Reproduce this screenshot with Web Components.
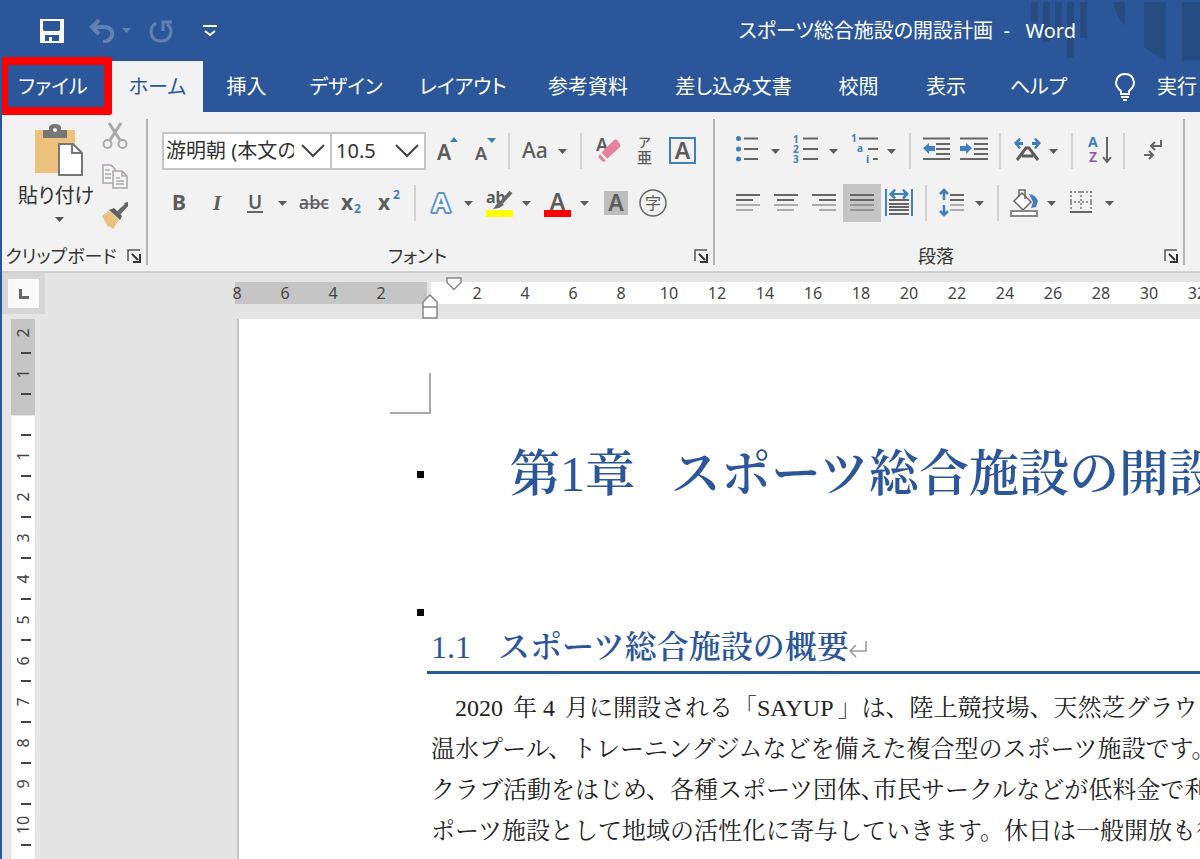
<!DOCTYPE html>
<html lang="ja">
<head>
<meta charset="utf-8">
<title>スポーツ総合施設の開設計画 - Word</title>
<style>
  html, body { margin: 0; height: 100%; }
  body {
    overflow: hidden;
    font-family: "Noto Sans", "Noto Sans CJK JP", sans-serif;
    --blue: #2b579a;
    --chrome: #f2f2f2;
    --desk: #e5e5e5;
    --ink: #5c5c5c;
    --accent: #3f7fbd;
  }
</style>
</head>
<body>
<word-window></word-window>

<script>
const line = (x1, y, x2, w = 2) => `<path d="M${x1} ${y}H${x2}" stroke="#666" stroke-width="${w}"/>`;
const txt = (x, y, size, s, extra = '') =>
  `<text x="${x}" y="${y}" font-size="${size}" ${extra}>${s}</text>`;
const B = 'font-weight="700"';
const BLUE = 'fill="#3f7fbd"';

/* Every icon is drawn on a 38 x 38 grid, the size of a ribbon button. */
const ICONS = {
  grow: txt(11, 28, 21, 'A', 'font-weight="600"') + `<path d="M24 10h8l-4-5z" ${BLUE}/>`,
  shrink: txt(11, 28, 18, 'A', 'font-weight="600"') + `<path d="M23 6h9l-4 5z" ${BLUE}/>`,
  case: txt(6, 26, 21, 'Aa', 'font-weight="500"'),
  clear: txt(8, 19, 18, 'A', 'font-weight="600"') +
    `<path d="M13 21l13-13q2-1 3 0l3 4q1 2 0 3L19 27z" fill="#e8819b"/><path d="M12 22l6 7-3 1-5-5z" fill="#e8819b"/><path d="M12.500 20.500l7 7.500" stroke="#f2f2f2" stroke-width="1.500"/>`,
  ruby: txt(12, 15, 13, 'ア', 'font-weight="500"') + txt(11, 31, 15, '亜', 'font-weight="500"'),
  boxed: `<rect x="6" y="6" width="25" height="25" fill="none" stroke="#3f7fbd" stroke-width="2"/>` + txt(18.500, 27, 23, 'A', 'font-weight="600" text-anchor="middle"'),
  bold: txt(19, 26, 21, 'B', B + ' text-anchor="middle"'),
  italic: txt(19, 26, 21, 'I', 'font-weight="700" font-style="italic" font-family="Liberation Serif, serif" text-anchor="middle"'),
  underline: txt(19, 25, 19, 'U', 'font-weight="600" text-anchor="middle"') + line(11, 28, 27, 2),
  strike: txt(20, 25, 18, 'abc', 'text-anchor="middle" font-weight="500"') + line(6, 20, 34, 1.500),
  sub: txt(9, 26, 21, 'x', B) + txt(22, 29, 12, '2', BLUE + ' ' + B),
  sup: txt(8, 26, 21, 'x', B) + txt(23, 15, 12, '2', BLUE + ' ' + B),
  effect: `<g font-size="26" text-anchor="middle"><text x="19" y="28" font-weight="600" paint-order="stroke" style="fill:#fff;stroke:#5b94cc;stroke-width:4;stroke-linejoin:round">A</text></g>`,
  marker: txt(6, 19, 16, 'ab', B) + `<path d="M31 8L20 20" stroke="#686868" stroke-width="4"/><path d="M19 17l5 4-5 3-6 1z" fill="#686868"/><path d="M6 26h27v7H6z" fill="#ff0"/>`,
  color: txt(19.500, 26, 23, 'A', 'font-weight="600" text-anchor="middle"') + `<path d="M6 26h27v7H6z" fill="#f00"/>`,
  shade: `<path d="M8 7h24v24H8z" fill="#bdbdbd"/>` + txt(20, 27, 23, 'A', 'font-weight="600" text-anchor="middle"'),
  enclose: `<circle cx="19" cy="19" r="13" fill="none" stroke="#666" stroke-width="1.500"/>` + txt(19, 25, 16, '字', 'text-anchor="middle"'),
  bullets: [6.5, 17, 27].map(y => `<circle cx="9.500" cy="${y}" r="2.500" ${BLUE}/>` + line(15, y, 29)).join(''),
  numbers: [6.5, 17, 27].map((y, i) => txt(6, y + 4, 10, i + 1, BLUE + ' ' + B) + line(16, y, 31)).join(''),
  levels: txt(6, 10, 10, '1', BLUE + ' ' + B) + line(14, 6.5, 33) + txt(12, 20, 10, 'a', BLUE + ' ' + B) + line(23, 17, 33) + txt(21, 31, 11, 'i', BLUE + ' ' + B) + line(28, 27, 33),
  outdent: line(6, 6.5, 33) + line(19, 12, 33) + line(19, 17, 33) + line(19, 22, 33) + line(6, 27, 33) + `<path d="M6 16l6-5v3h6v5h-6v3z" ${BLUE}/>`,
  indent: line(5, 6.5, 33) + line(19, 12, 33) + line(19, 17, 33) + line(19, 22, 33) + line(5, 27, 33) + `<path d="M17 16l-6-5v3H5v5h6v3z" ${BLUE}/>`,
  asian: `<path d="M10 28l9-12h3l9 12M15 24h11" fill="none" stroke="#5c5c5c" stroke-width="3"/><path d="M7 11l5-5 2 1-2 3h4v3h-4l2 3-2 1zM34 11l-5-5-2 1 2 3h-4v3h4l-2 3 2 1z" ${BLUE}/>`,
  sort: txt(9, 15, 14, 'A', BLUE + ' ' + B) + txt(10, 30, 14, 'Z', 'fill="#8f4fb0" font-weight="600"') + `<path d="M28 5v24M24 25l4 5 4-5" fill="none" stroke="#666" stroke-width="2"/>`,
  marks: `<path d="M30 8v6h-9M24 10l-4 4 4 4M13 23h8M18 19l4 4-4 4" fill="none" stroke="#666" stroke-width="2"/>`,
  left: line(7, 11, 31) + line(7, 16, 24) + line(7, 21, 31, 1) + line(7, 26, 24, 1),
  center: line(7, 11, 31) + line(10, 16, 27) + line(7, 21, 31, 1) + line(10, 26, 27, 1),
  right: line(7, 11, 31) + line(14, 16, 31) + line(7, 21, 31, 1) + line(14, 26, 31, 1),
  justify: line(7, 11, 31) + line(7, 16, 31) + line(7, 21, 31, 1) + line(7, 26, 31, 1),
  distribute: `<path d="M5 5v27M31 5v27" stroke="#3f7fbd" stroke-width="2"/><path d="M8 10l5-5 2 1-2 3h10l-2-3 2-1 5 5-5 5-2-1 2-3H13l2 3-2 1z" ${BLUE}/>` + [16, 20, 23, 26, 30].map(y => line(8, y, 28)).join(''),
  spacing: `<path d="M11 6v10M7 10l4-4 4 4M11 21v10M7 27l4 4 4-4" fill="none" stroke="#3f7fbd" stroke-width="2.500"/>` + line(17, 11, 31) + line(17, 16, 31) + line(17, 21, 31, 1) + line(17, 26, 31, 1),
  fill: `<path d="M9 17l8-8 9 9-8 8z" fill="#fff" stroke="#666" stroke-width="1.500"/><path d="M14 12V6h6v9" fill="none" stroke="#666" stroke-width="1.500"/><path d="M24 10q7 1 9 7l-2 6-5 1 2-6z" ${BLUE}/><rect x="6" y="27" width="26" height="5" fill="#fff" stroke="#888" stroke-width="2"/>`,
  borders: `<path d="M7 8h22M7 18h22M8 7v20M18 7v20M28 7v20" stroke="#777" stroke-width="1.500" stroke-dasharray="2 2" fill="none"/>` + line(7, 28, 29),
  cut: `<path d="M13 5l11 17M25 5L14 22" stroke="#a9a9a9" stroke-width="3"/><circle cx="11.500" cy="26" r="4" fill="none" stroke="#a9a9a9" stroke-width="2"/><circle cx="26.500" cy="26" r="4" fill="none" stroke="#a9a9a9" stroke-width="2"/>`,
  copy: `<g fill="#f7f5f7" stroke="#aaa5aa" stroke-width="1.500"><path d="M7 7h8l4 4v14H7z"/><path d="M17 13h9l5 5v12H17z"/><path d="M26 13v5h5M9 12h5M9 16h6M9 20h6M20 20h4M20 23h8M20 26h8" fill="none"/></g>`,
  brush: `<path d="M6 18l7-5 10 9-6 9-4-3-1 1z" fill="#edc27c"/><path d="M13 12l5-2 8 8-2 4z" fill="#5f5f5f"/><path d="M20 14l9-8 3 2-8 9z" fill="#6a6a6a"/><path d="M28 5l4-1v5z" fill="#5f5f5f"/>`
};

const CARET = `<svg width="9" height="5" viewBox="0 0 9 5" aria-hidden="true"><path d="M0 0h9L4.500 5z" fill="currentColor"/></svg>`;

function define(name, template) {
  customElements.define(name, class extends HTMLElement {
    constructor() {
      super();
      this.attachShadow({ mode: 'open' });
    }
    connectedCallback() {
      if (this.shadowRoot.childNodes.length) return;
      this.shadowRoot.innerHTML = typeof template === 'function' ? template(this) : template;
    }
  });
}

define('tool-button', el => `
  <style>
    :host { display: flex; flex: none; height: 38px; }
    button { width: 38px; height: 38px; padding: 0; border: 0; background: none; color: var(--ink); font: inherit; }
    button.on { background: #c5c5c5; }
    button.more { width: 16px; margin-right: 4px; display: grid; place-items: center; }
    svg { display: block; }
    text { fill: var(--ink); }
    text[fill="#3f7fbd"] { fill: #3f7fbd; }
    text[fill="#8f4fb0"] { fill: #8f4fb0; }
  </style>
  <button class="${el.hasAttribute('pressed') ? 'on' : ''}" aria-label="${el.getAttribute('label')}">
    <svg width="38" height="38" viewBox="0 0 38 38" aria-hidden="true">${ICONS[el.getAttribute('icon')]}</svg>
  </button>
  ${el.hasAttribute('split') ? `<button class="more" aria-label="${el.getAttribute('label')}のオプション">${CARET}</button>` : ''}`);

define('tool-divider', `
  <style>:host { display: block; flex: none; width: 2px; height: 36px; margin: 0 6px; background: #d2d2d2; }</style>`);

define('combo-box', el => `
  <style>
    :host { display: grid; flex: none; height: 38px; box-sizing: border-box; background: #fff; border: 2px solid #c6c6c6; }
    select, svg { grid-area: 1 / 1; }
    select { appearance: none; width: 100%; min-width: 0; height: 34px; border: 0; margin: 0; background: none; color: #333;
      padding: 0 36px 0 var(--combo-inset, 2px); font: 20px/34px "Noto Sans", "Noto Sans CJK JP", sans-serif; }
    svg { justify-self: end; align-self: center; margin-right: 5px; pointer-events: none; }
  </style>
  <select aria-label="${el.getAttribute('label')}"><option>${el.getAttribute('value')}</option></select>
  <svg width="24" height="14" viewBox="0 0 24 14" aria-hidden="true"><path d="M1 1l11 11L23 1" fill="none" stroke="#444" stroke-width="2"/></svg>`);

define('ribbon-group', el => `
  <style>
    :host { display: flex; flex: none; flex-direction: column; box-sizing: border-box; height: 159px; position: relative; }
    .body { flex: 1; padding: 20px 12px 0; }
    :host([wide-start]) .body { padding-left: 14px; }
    footer { display: flex; align-items: center; height: 30px; }
    h2 { flex: 1; margin: 0; text-align: center; font-weight: 400; font-size: 18px; line-height: 24px; color: #333; white-space: nowrap; font-feature-settings: "palt"; }
    button { width: 28px; height: 24px; padding: 0; border: 0; background: none; display: grid; place-items: center; }
    i { position: absolute; right: 0; top: 7px; bottom: 6px; width: 2px; background: #b4b4b4; }
  </style>
  <div class="body"><slot></slot></div>
  <footer>
    <h2>${el.getAttribute('name')}</h2>
    <button aria-label="${el.getAttribute('name')}の設定"><svg width="14" height="14" viewBox="0 0 14 14" aria-hidden="true"><path d="M1 12V1h12" fill="none" stroke="#555" stroke-width="1.500"/><path d="M5 5l6 6M13 5v8H6" fill="none" stroke="#333" stroke-width="2"/></svg></button>
  </footer>
  <i></i>`);

define('paste-button', `
  <style>
    :host { display: block; }
    button { display: flex; flex-direction: column; align-items: center; padding: 0; border: 0; background: none; font: inherit; color: #333; }
    .art { margin-left: 6px; }
    span { font-size: 20px; line-height: 30px; margin-top: 5px; white-space: nowrap; font-feature-settings: "palt"; }
    .c { display: block; height: 5px; margin-top: 5px; margin-left: 6px; line-height: 0; color: #555; }
  </style>
  <button>
    <svg class="art" width="50" height="52" viewBox="0 0 50 52" aria-hidden="true">
      <path d="M1 6h40v43H1z" fill="#edc27c"/>
      <path d="M9 6h6V3q1-3 6-3t6 3v3h6v8H9z" fill="#777"/><circle cx="21" cy="6" r="2" fill="#f2f2f2"/>
      <path d="M25 20h14l9 9v22H25z" fill="#fff" stroke="#777" stroke-width="2"/><path d="M38 20v9h10" fill="none" stroke="#777" stroke-width="2"/>
    </svg>
    <span>貼り付け</span>
    <i class="c">${CARET}</i>
  </button>`);

define('title-bar', `
  <style>
    :host { display: flex; align-items: center; height: 61px; position: relative; color: #fff; background: var(--blue); }
    .deco { position: absolute; right: 0; top: 0; }
    nav { display: flex; align-items: center; padding-left: 36px; }
    button { padding: 0; border: 0; background: none; color: #5f81b4; height: 32px; display: grid; place-items: center; }
    .save { width: 28px; margin-right: 20px; }
    .undo { width: 32px; } .drop { width: 16px; margin-right: 11px; } .redo { width: 32px; margin-right: 17px; } .custom { width: 32px; }
    h1 { position: relative; margin: 0 124px 0 auto; font-size: 20px; line-height: 30px; font-weight: 400; white-space: pre; font-feature-settings: "palt"; }
  </style>
  <svg class="deco" width="170" height="61" viewBox="0 0 170 61" aria-hidden="true"><path fill="#274c82" d="M1 2h7v20H1zM13 2h7v40h-7zM25 2h7v31h-7zM37 2h7v56h-7zM50 2h7v36h-7zM83 2h12v24q-9-10-12-24zM114 2h22v58q-12-5-22-13zM152 2h18v63h-14l-4-2z"/></svg>
  <nav aria-label="クイック アクセス">
    <button class="save" aria-label="上書き保存"><svg width="24" height="24" viewBox="0 0 24 24"><path fill="#fff" fill-rule="evenodd" d="M0 0h24v24H0zM3 2v9l1 1h15l1-1V2zM5 16v6h4v-4h3v4h7v-6z"/></svg></button>
    <button class="undo" aria-label="元に戻す"><svg width="26" height="24" viewBox="0 0 26 24"><path d="M10 1L3 8l7 7M3 8h13q8 1 7 8-1 6-9 7" fill="none" stroke="currentColor" stroke-width="4"/></svg></button>
    <button class="drop" aria-label="元に戻す履歴">${CARET}</button>
    <button class="redo" aria-label="やり直し"><svg width="24" height="24" viewBox="0 0 24 24"><path d="M7 4q-5 3-5 9 1 9 10 9t10-9q0-5-4-8M14 12V3h9" fill="none" stroke="currentColor" stroke-width="3"/></svg></button>
    <button class="custom" aria-label="カスタマイズ"><svg width="14" height="12" viewBox="0 0 14 12"><path d="M0 1h14M2 6l5 4 5-4" fill="none" stroke="#fff" stroke-width="2"/></svg></button>
  </nav>
  <h1>スポーツ総合施設の開設計画  -   Word</h1>`);

define('ribbon-tabs', `
  <style>
    :host { display: block; position: relative; background: var(--blue); color: #fff; }
    nav { display: grid; grid-template-columns: 102px 99px 87px 112px 122px 128px 163px 87px 88px 97px 1fr; height: 51px; overflow: hidden; }
    a { display: flex; align-items: center; justify-content: center; font-size: 20px; line-height: 30px; color: inherit; text-decoration: none; white-space: nowrap; font-feature-settings: "palt"; }
    a.active { background: var(--chrome); color: var(--blue); margin-left: 8px; }
    a.tell { justify-content: flex-start; gap: 22px; padding-left: 28px; }
    a.tell svg { flex: none; }
    .ring { position: absolute; left: -2px; top: -4px; width: 96px; height: 42px; border: 8px solid #f00; border-radius: 2px; z-index: 1; pointer-events: none; }
  </style>
  <nav aria-label="リボン">
    <a href="#file">ファイル</a><a href="#home" class="active" aria-current="page">ホーム</a><a href="#insert">挿入</a><a href="#design">デザイン</a><a href="#layout">レイアウト</a><a href="#references">参考資料</a><a href="#mailings">差し込み文書</a><a href="#review">校閲</a><a href="#view">表示</a><a href="#help">ヘルプ</a>
    <a href="#tell" class="tell"><svg width="20" height="28" viewBox="0 0 20 28" aria-hidden="true"><path d="M6 21v-3Q1 14 1 9.500 2 1 10 1t9 8.500Q19 14 14 18v3zM6 24h8M8 27h4" fill="none" stroke="#fff" stroke-width="2"/></svg>実行</a>
  </nav>
  <div class="ring"></div>`);

define('ribbon-panel', `
  <style>
    :host { display: flex; overflow: hidden; background: var(--chrome); border-bottom: 2px solid #d0d0d0; }
    .row { display: flex; align-items: center; height: 38px; }
    .row + .row { margin-top: 14px; }
    .clip { flex-basis: 146px; }
    .paste { display: flex; margin: -8px -12px 0 4px; }
    .stack { display: flex; flex-direction: column; height: 120px; justify-content: space-between; margin: -6px 0 0 2px; }
    .stack tool-button { height: 40px; }
    .font { flex-basis: 567px; }
    .para { flex-basis: 470px; }
    .name { width: 170px; margin-left: 2px; }
    .size { width: 96px; margin-left: -2px; --combo-inset: 4px; }
  </style>
  <ribbon-group class="clip" name="クリップボード">
    <div class="paste">
      <paste-button></paste-button>
      <div class="stack">
        <tool-button icon="cut" label="切り取り"></tool-button>
        <tool-button icon="copy" label="コピー"></tool-button>
        <tool-button icon="brush" label="書式のコピー"></tool-button>
      </div>
    </div>
  </ribbon-group>
  <ribbon-group class="font" name="フォント">
    <div class="row">
      <combo-box class="name" label="フォント" value="游明朝 (本文のフォント)"></combo-box>
      <combo-box class="size" label="フォント サイズ" value="10.5"></combo-box>
      <tool-button icon="grow" label="フォント サイズの拡大"></tool-button>
      <tool-button icon="shrink" label="フォント サイズの縮小"></tool-button>
      <tool-divider></tool-divider>
      <tool-button icon="case" label="文字種の変換" split></tool-button>
      <tool-divider></tool-divider>
      <tool-button icon="clear" label="書式のクリア"></tool-button>
      <tool-button icon="ruby" label="ルビ"></tool-button>
      <tool-button icon="boxed" label="囲み線"></tool-button>
    </div>
    <div class="row">
      <tool-button icon="bold" label="太字"></tool-button>
      <tool-button icon="italic" label="斜体"></tool-button>
      <tool-button icon="underline" label="下線" split></tool-button>
      <tool-button icon="strike" label="取り消し線"></tool-button>
      <tool-button icon="sub" label="下付き"></tool-button>
      <tool-button icon="sup" label="上付き"></tool-button>
      <tool-divider></tool-divider>
      <tool-button icon="effect" label="文字の効果" split></tool-button>
      <tool-button icon="marker" label="蛍光ペン" split></tool-button>
      <tool-button icon="color" label="フォントの色" split></tool-button>
      <tool-button icon="shade" label="文字の網かけ"></tool-button>
      <tool-button icon="enclose" label="囲い文字"></tool-button>
    </div>
  </ribbon-group>
  <ribbon-group class="para" name="段落" wide-start>
    <div class="row">
      <tool-button icon="bullets" label="箇条書き" split></tool-button>
      <tool-button icon="numbers" label="段落番号" split></tool-button>
      <tool-button icon="levels" label="アウトライン" split></tool-button>
      <tool-divider></tool-divider>
      <tool-button icon="outdent" label="インデントを減らす"></tool-button>
      <tool-button icon="indent" label="インデントを増やす"></tool-button>
      <tool-divider></tool-divider>
      <tool-button icon="asian" label="拡張書式" split></tool-button>
      <tool-divider></tool-divider>
      <tool-button icon="sort" label="並べ替え"></tool-button>
      <tool-divider></tool-divider>
      <tool-button icon="marks" label="編集記号の表示"></tool-button>
    </div>
    <div class="row">
      <tool-button icon="left" label="左揃え"></tool-button>
      <tool-button icon="center" label="中央揃え"></tool-button>
      <tool-button icon="right" label="右揃え"></tool-button>
      <tool-button icon="justify" label="両端揃え" pressed></tool-button>
      <tool-button icon="distribute" label="均等割り付け"></tool-button>
      <tool-divider></tool-divider>
      <tool-button icon="spacing" label="行間" split></tool-button>
      <tool-divider></tool-divider>
      <tool-button icon="fill" label="塗りつぶし" split></tool-button>
      <tool-button icon="borders" label="罫線" split></tool-button>
    </div>
  </ribbon-group>`);

define('page-ruler', () => {
  /* Two characters per 48px step, as many as the window shows. */
  const marks = [8, 6, 4, 2, ''];
  for (let n = 2; n <= (innerWidth - 430) / 24; n += 2) marks.push(n);
  return `
  <style>
    :host { display: flex; height: 46px; overflow: hidden; background: var(--desk); }
    button { flex: none; width: 43px; height: 41px; padding: 0; border: 6px solid #d6d6d6; background: #fbfbfb; display: grid; place-items: center; }
    .scale { flex: 1; min-width: 0; display: flex; position: relative; height: 22px; margin: 9px 0 0 168px;
      background: linear-gradient(90deg, transparent 22px, #c5c5c5 22px, #c5c5c5 214px, transparent 214px, transparent 218px, #fff 218px); }
    span { flex: none; width: 48px; text-align: center; font-size: 16px; line-height: 22px; color: #444; }
    .first { position: absolute; left: 233px; top: -5px; }
    .hang { position: absolute; left: 209px; top: 12px; }
  </style>
  <button aria-label="左揃えタブ"><svg width="10" height="10" viewBox="0 0 10 10" aria-hidden="true"><path d="M1.500 0v8.500H10" fill="none" stroke="#666" stroke-width="3"/></svg></button>
  <div class="scale">${marks.map(n => `<span>${n}</span>`).join('')}
    <svg class="first" width="16" height="14" viewBox="0 0 16 14"><path d="M1 1h14v4.500L8 12.500 1 5.500z" fill="#fff" stroke="#888" stroke-width="1.500"/></svg>
    <svg class="hang" width="16" height="25" viewBox="0 0 16 25"><path d="M1 24V8l7-7 7 7v16zM1 13h14" fill="#fff" stroke="#888" stroke-width="1.500"/></svg>
  </div>`;
});

define('side-ruler', () => {
  const marks = ['2', '1', ''];
  for (let n = 1; n <= (innerHeight - 415) / 41; n++) marks.push(n);
  return `
  <style>
    :host { display: block; flex: none; width: 24px; margin-left: 9px; overflow: hidden;
      background: linear-gradient(#c5c5c5 96px, var(--desk) 96px, var(--desk) 97px, #fff 97px); }
    div { margin-top: -7px; }
    p { display: grid; place-items: center; box-sizing: border-box; height: 41px; margin: 0; position: relative; }
    p::after { content: ""; position: absolute; left: 10px; bottom: -1px; width: 10px; height: 2px; background: #444; }
    span { font-size: 16px; line-height: 24px; color: #444; transform: rotate(-90deg); }
  </style>
  <div>${marks.map(n => `<p><span>${n}</span></p>`).join('')}</div>`;
});

define('document-page', `
  <style>
    :host { display: block; flex: 1; min-width: 0; margin-left: 202px; overflow: hidden; background: #fff; border-left: 2px solid #c6c6c6; white-space: nowrap;
      font-family: "Liberation Serif", "Noto Serif CJK JP", "Noto Sans CJK JP", serif; }
    .corner { width: 39px; height: 39px; margin: 54px 0 0 151px; border: solid #aaa; border-width: 0 2px 2px 0; }
    h1, h2 { margin: 0; font-weight: 600; color: var(--blue); }
    h1 { display: flex; align-items: center; margin-top: 30px; padding-left: 178px; font-size: 50px; line-height: 60px; }
    .dot { flex: none; width: 7px; height: 7px; background: #000; }
    h1 .dot { margin-right: 86px; }
    h1 b { font-weight: inherit; margin-right: 36px; }
    .num { font-weight: 500; }
    .solo { margin: 105px 0 0 178px; }
    h2 { margin: 11px 0 0 188px; padding: 0 0 4px 4px; border-bottom: 3px solid var(--blue); font-size: 32px; line-height: 40px; }
    h2 .num { margin-right: 27px; }
    p { margin: 14px 0 0 192px; font-size: 24px; line-height: 41px; color: #222; font-weight: 400; }
    .latin { margin-right: 4px; }
    .tight { font-feature-settings: "palt"; }
  </style>
  <div class="corner"></div>
  <h1><i class="dot"></i><b>第<span class="num">1</span>章</b><span>スポーツ総合施設の開設計画</span></h1>
  <div class="dot solo"></div>
  <h2><span class="num">1.1</span>スポーツ総合施設の概要<svg width="18" height="18" viewBox="0 0 18 18" aria-hidden="true"><path d="M17 1v10H2M7 5l-6 6 6 6" fill="none" stroke="#999" stroke-width="1.500"/></svg></h2>
  <p>　<span class="latin">2020</span> 年 <span class="latin">4</span> 月に開設される「<span class="latin">SAYUP</span>」は、陸上競技場、天然芝グラウ<br>温水プール、トレーニングジムなどを備えた複合型のスポーツ施設です。<br>クラブ活動をはじめ、各種スポーツ団体<span class="tight">、</span>市民サークルなどが低料金で利<br>ポーツ施設として地域の活性化に寄与していきます。休日は一般開放も行</p>`);

define('word-window', `
  <style>
    :host { display: flex; flex-direction: column; height: 100vh; box-sizing: border-box; border-left: 2px solid var(--blue); background: var(--desk); overflow: hidden; }
    title-bar, ribbon-tabs, ribbon-panel, page-ruler { flex: none; }
    main { flex: 1; min-height: 0; display: flex; }
  </style>
  <title-bar></title-bar>
  <ribbon-tabs></ribbon-tabs>
  <ribbon-panel></ribbon-panel>
  <page-ruler></page-ruler>
  <main><side-ruler></side-ruler><document-page></document-page></main>`);
</script>
</body>
</html>
